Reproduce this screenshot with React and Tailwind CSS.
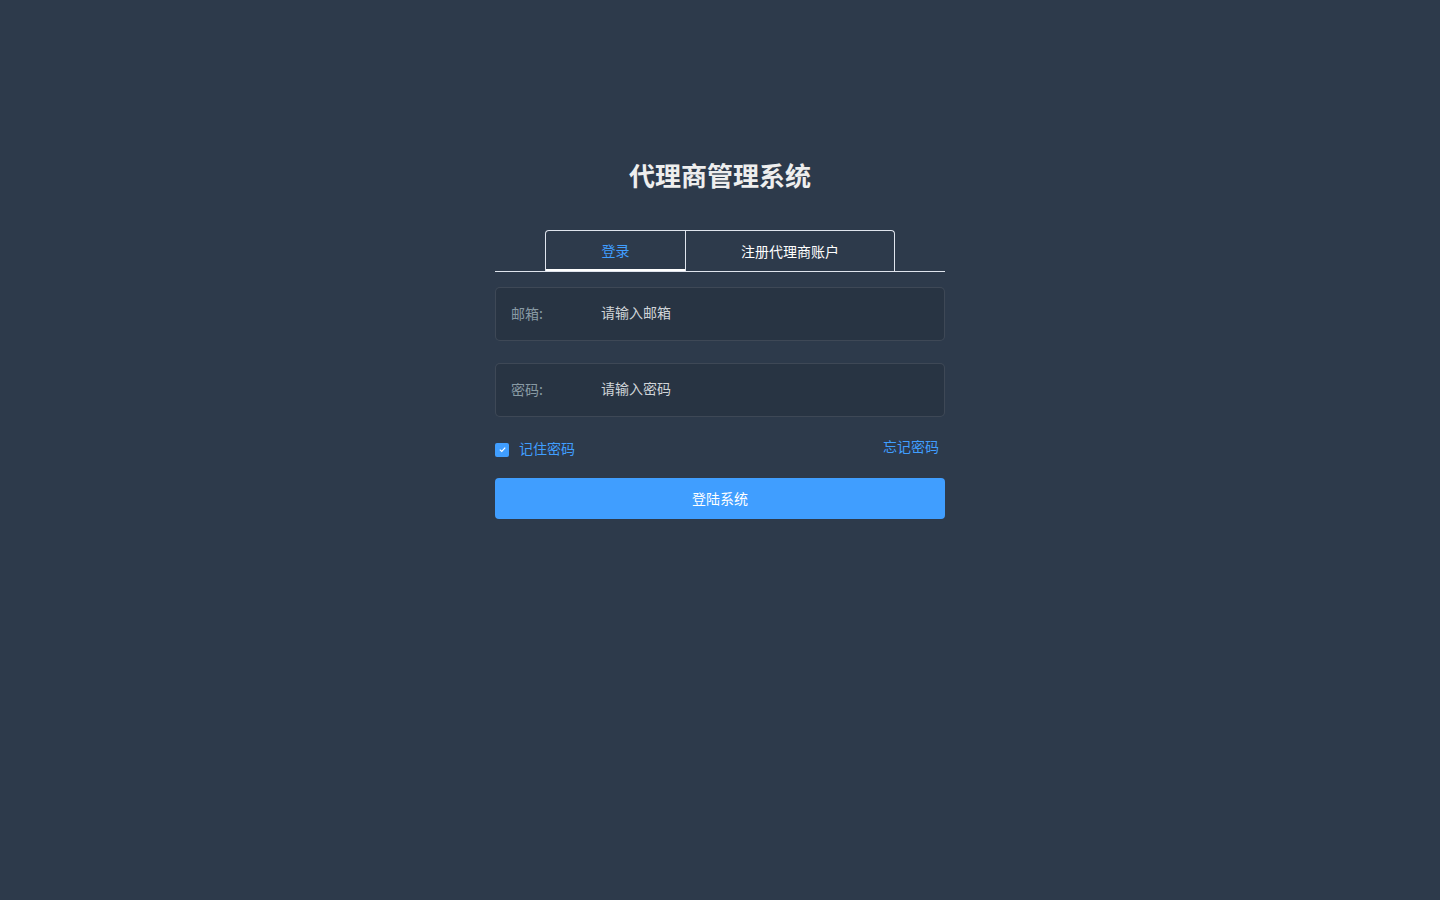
import { useState } from 'react'

const font = { fontFamily: '"Noto Sans CJK SC", "Noto Sans", sans-serif' }

function Field({ label, placeholder, type = 'text' }) {
  return (
    <div className="flex items-center h-[54px] rounded-[5px] border border-white/10 bg-black/10 px-[15px] pb-[2px]">
      <span className="w-[90px] text-sm text-[#889aa4]">{label}</span>
      <input type={type} placeholder={placeholder}
        className="flex-1 bg-transparent outline-none text-sm text-[#eee] placeholder-[#d0d4d9] mt-[-2px]" />
    </div>
  )
}

export default function App() {
  const [tab, setTab] = useState('login')
  const [remember, setRemember] = useState(true)

  return (
    <div className="min-h-screen w-full bg-[#2d3a4b]" style={font}>
      <div className="w-[450px] mx-auto pt-[156px]">
        <h3 className="text-center text-[26px] font-bold text-[#eee] leading-[38px]">代理商管理系统</h3>

        {/* tabs */}
        <div className="mt-[36px] flex justify-center border-b border-[#dfe4ed]">
          <div className="flex border border-b-0 border-[#dfe4ed] rounded-t-[4px]">
            <button onClick={() => setTab('login')}
              className={`w-[139px] h-[40px] text-sm border-b-2 ${tab === 'login' ? 'text-[#409eff] border-white' : 'text-white border-transparent'}`}>
              登录
            </button>
            <button onClick={() => setTab('register')}
              className={`w-[209px] h-[40px] text-sm border-l border-[#dfe4ed] ${tab === 'register' ? 'text-[#409eff]' : 'text-white'}`}>
              注册代理商账户
            </button>
          </div>
        </div>

        <div className="mt-[15px] flex flex-col gap-[22px]">
          <Field label="邮箱:" placeholder="请输入邮箱" />
          <Field label="密码:" placeholder="请输入密码" type="password" />
        </div>

        <div className="mt-[20px] flex items-center justify-between">
          <label className="flex items-center gap-[10px] cursor-pointer mt-[4px]" onClick={() => setRemember(!remember)}>
            <span className={`w-[14px] h-[14px] rounded-[2px] flex items-center justify-center ${remember ? 'bg-[#409eff]' : 'border border-[#dcdfe6] bg-white'}`}>
              {remember && (
                <svg width="9" height="9" viewBox="0 0 10 10" fill="none" stroke="white" strokeWidth="1.3">
                  <polyline points="2,5.2 4.2,7.2 8,3" />
                </svg>
              )}
            </span>
            <span className="text-sm text-[#409eff] mt-[-3px]">记住密码</span>
          </label>
          <a className="text-sm text-[#409eff] mr-[6px] mt-[-4px] cursor-pointer">忘记密码</a>
        </div>

        <button className="mt-[20px] w-full h-[41px] rounded-[4px] bg-[#409eff] text-white text-sm pb-[2px]">登陆系统</button>
      </div>
    </div>
  )
}
